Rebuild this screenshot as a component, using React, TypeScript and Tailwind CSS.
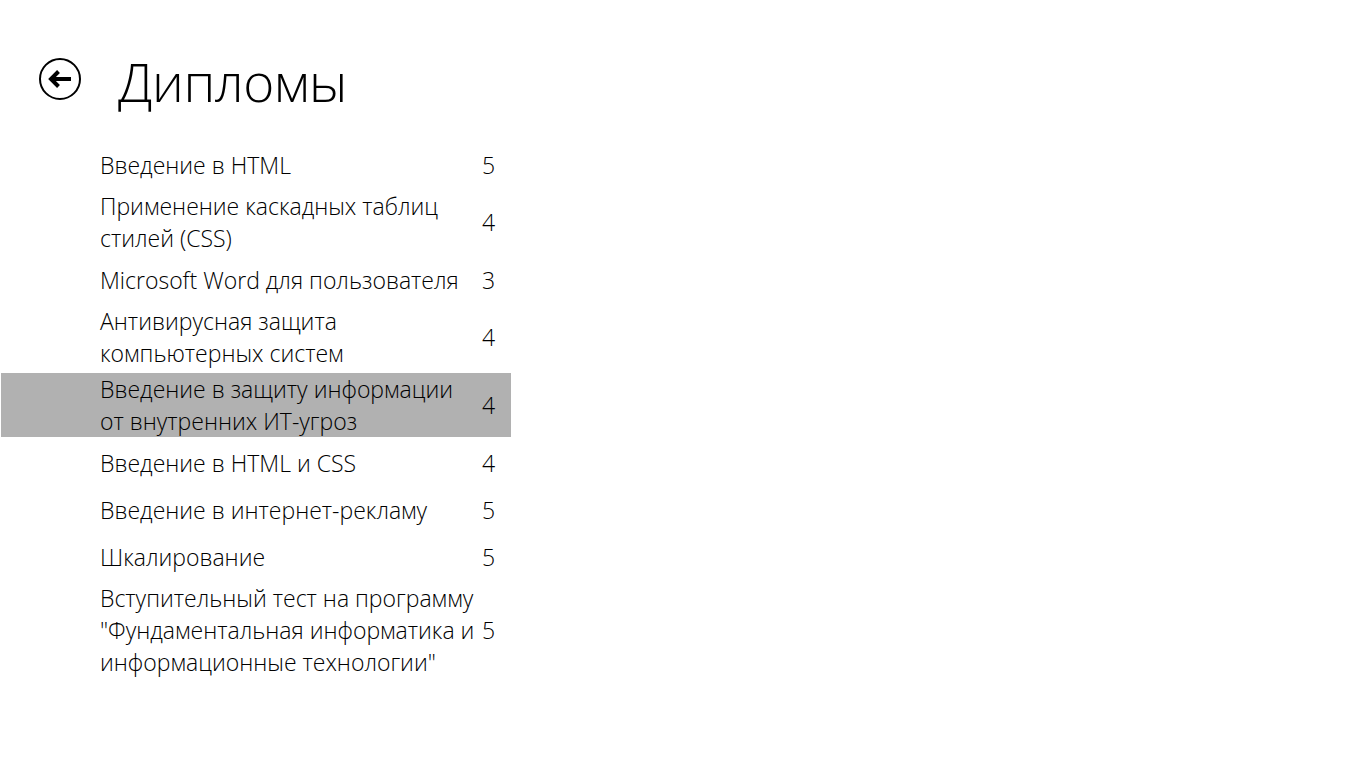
import React from 'react';

const diplomas = [
  { title: 'Введение в HTML', grade: 5 },
  { title: 'Применение каскадных таблиц стилей (CSS)', grade: 4 },
  { title: 'Microsoft Word для пользователя', grade: 3 },
  { title: 'Антивирусная защита компьютерных систем', grade: 4 },
  { title: 'Введение в защиту информации от внутренних ИТ-угроз', grade: 4, selected: true },
  { title: 'Введение в HTML и CSS', grade: 4 },
  { title: 'Введение в интернет-рекламу', grade: 5 },
  { title: 'Шкалирование', grade: 5 },
  { title: 'Вступительный тест на программу "Фундаментальная информатика и информационные технологии"', grade: 5 },
];

function BackButton() {
  return (
    <button type="button" className="w-[42px] h-[42px] shrink-0 text-black">
      <svg viewBox="0 0 42 42" width="42" height="42" fill="none" stroke="currentColor">
        <circle cx="21" cy="21" r="20" strokeWidth="2" />
        <path d="M12 21h20" strokeWidth="4" />
        <path d="M19.5 13.5L12 21l7.5 7.5" strokeWidth="4" strokeLinejoin="miter" />
      </svg>
    </button>
  );
}

export default function App() {
  return (
    <div className="w-[1366px] h-[768px] bg-white text-black overflow-hidden font-['Open_Sans','Noto_Sans',sans-serif]">
      <header className="flex items-start pt-[58px] pl-[39px]">
        <BackButton />
        <h1 className="ml-[37px] text-[53px] leading-[48px] font-light tracking-[-0.5px]">Дипломы</h1>
      </header>

      <ul className="mt-[37px] ml-[1px] w-[510px] flex flex-col gap-[4px]">
        {diplomas.map((d) => (
          <li
            key={d.title}
            className={`flex items-center pl-[99px] min-h-[43px] ${d.selected ? 'bg-[#b1b1b1]' : ''}`}
          >
            <span className="w-[382px] text-[23px] leading-[32px] font-light">{d.title}</span>
            <span className="text-[23px] leading-[32px] font-light">{d.grade}</span>
          </li>
        ))}
      </ul>
    </div>
  );
}
